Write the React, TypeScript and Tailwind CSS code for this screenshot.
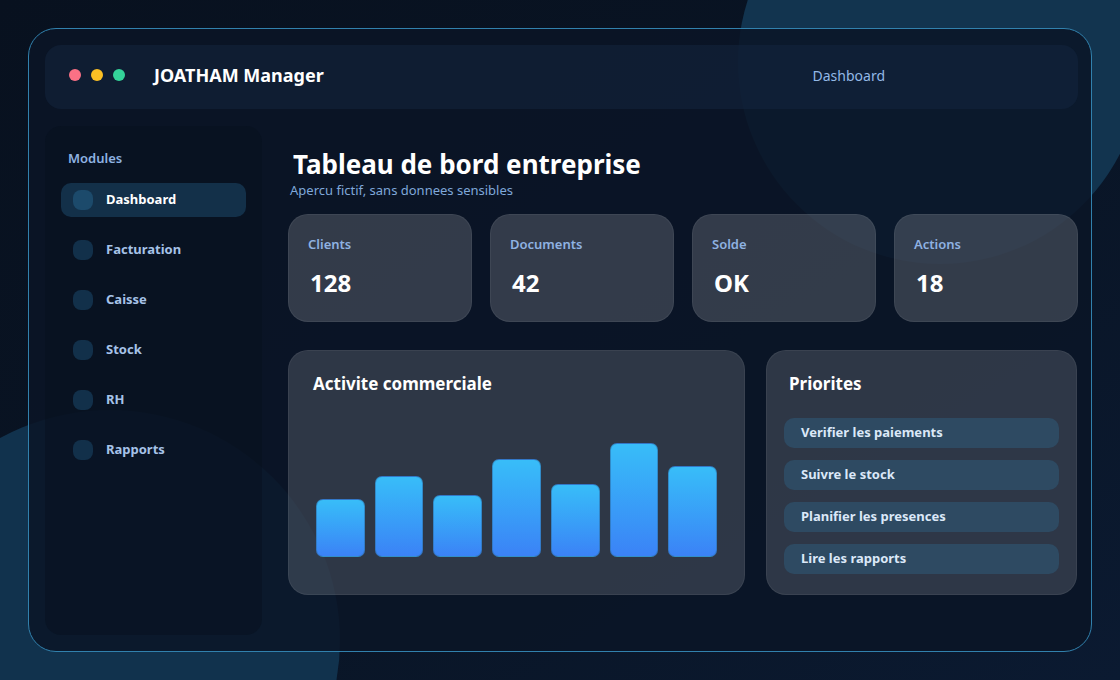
import type { ReactNode } from 'react'

const modules = ['Dashboard', 'Facturation', 'Caisse', 'Stock', 'RH', 'Rapports']

const stats = [
  { label: 'Clients', value: '128' },
  { label: 'Documents', value: '42' },
  { label: 'Solde', value: 'OK' },
  { label: 'Actions', value: '18' },
]

// bar heights in px, left to right
const bars = [58, 81, 62, 98, 73, 114, 91]

const priorities = ['Verifier les paiements', 'Suivre le stock', 'Planifier les presences', 'Lire les rapports']

function Card({ className, children }: { className?: string; children: ReactNode }) {
  return (
    <div className={`rounded-[20px] border border-white/[0.06] bg-white/[0.15] ${className ?? ''}`}>{children}</div>
  )
}

export default function App() {
  return (
    <div
      className="relative h-[680px] w-[1120px] overflow-hidden bg-gradient-to-br from-[#08111f] via-[#091424] to-[#0b1a31] p-[28px]"
      style={{ fontFamily: '"Noto Sans", "Open Sans", sans-serif' }}
    >
      {/* background blobs */}
      <div className="absolute left-[738px] top-[-140px] h-[404px] w-[404px] rounded-full bg-[#12344f]" />
      <div className="absolute left-[-120px] top-[410px] h-[460px] w-[460px] rounded-full bg-[#11324d]" />

      <div className="relative flex h-full flex-col gap-[17px] rounded-[28px] border-[1.5px] border-[#3181ad] bg-[#0a1527]/[0.86] py-4 pl-4 pr-[13px]">
        <header className="flex h-16 shrink-0 items-center rounded-2xl bg-[#13263f]/50 px-6 pb-1">
          <div className="flex items-center gap-[10px]">
            <span className="h-3 w-3 rounded-full bg-[#fb7185]" />
            <span className="h-3 w-3 rounded-full bg-[#fbbf24]" />
            <span className="h-3 w-3 rounded-full bg-[#34d399]" />
          </div>
          <div className="ml-[29px] text-[18px] font-bold text-white">JOATHAM Manager</div>
          <nav className="ml-auto mr-[169px] text-[14px] text-[#93b8e6]">Dashboard</nav>
        </header>

        <div className="flex min-h-0 flex-1 gap-[26px]">
          <aside className="w-[217px] shrink-0 rounded-2xl bg-[#070f1c]/45 px-4 pt-[23px]">
            <div className="px-[7px] text-[13px] font-semibold text-[#8fb2e2]">Modules</div>
            <ul className="mt-[14px] flex flex-col gap-4">
              {modules.map((m, i) => (
                <li
                  key={m}
                  className={`flex h-[34px] items-center gap-[13px] rounded-[10px] pl-3 text-[13px] font-bold ${
                    i === 0 ? 'bg-[#133049] text-white' : 'text-[#a6c2e8]'
                  }`}
                >
                  <span className={`h-5 w-5 rounded-lg ${i === 0 ? 'bg-[#1c4a6b]' : 'bg-[#12304a]'}`} />
                  {m}
                </li>
              ))}
            </ul>
          </aside>

          <main className="flex min-w-0 flex-1 flex-col pt-[22px]">
            <h1 className="pl-[5px] text-[26px] font-bold leading-8 text-white">Tableau de bord entreprise</h1>
            <p className="mt-[2px] pl-[2px] text-[13px] leading-4 text-[#7fa8da]">Apercu fictif, sans donnees sensibles</p>

            <div className="mt-4 grid grid-cols-4 gap-[18px]">
              {stats.map((s) => (
                <Card key={s.label} className="h-[108px] bg-white/[0.17] pl-[19px] pt-5">
                  <div className="text-[13px] font-semibold text-[#8fb2e2]">{s.label}</div>
                  <div className="ml-[2px] mt-[10px] text-[24px] font-bold text-white">{s.value}</div>
                </Card>
              ))}
            </div>

            <div className="mt-7 flex gap-[21px] pr-[1px]">
              <Card className="flex h-[245px] flex-1 flex-col px-[27px] pt-5">
                <h2 className="-ml-[3px] text-[17px] font-bold text-white">Activite commerciale</h2>
                <div className="mt-auto mb-[37px] flex items-end gap-[10px]">
                  {bars.map((h, i) => (
                    <div
                      key={i}
                      className="flex-1 rounded-[7px] border border-[#2f6fa8]/60 bg-gradient-to-b from-[#38bdf8] to-[#3b82f6]"
                      style={{ height: h }}
                    />
                  ))}
                </div>
              </Card>

              <Card className="h-[245px] w-[311px] shrink-0 px-[17px] pt-5">
                <h2 className="px-[5px] text-[17px] font-bold text-white">Priorites</h2>
                <ul className="mt-[21px] flex flex-col gap-3">
                  {priorities.map((p) => (
                    <li
                      key={p}
                      className="flex h-[30px] items-center rounded-[10px] bg-[#2e4a62] px-[17px] text-[13px] font-bold text-[#dbe8f8]"
                    >
                      {p}
                    </li>
                  ))}
                </ul>
              </Card>
            </div>
          </main>
        </div>
      </div>
    </div>
  )
}
